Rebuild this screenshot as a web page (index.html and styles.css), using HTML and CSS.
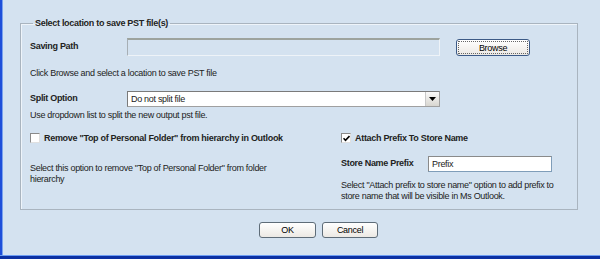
FILE: index.html
```html
<!DOCTYPE html>
<html lang="en">
<head>
  <meta charset="UTF-8" />
  <title>Save PST</title>
  <link rel="stylesheet" href="styles.css">
</head>
<body>

<div class="window">
  <div class="dialog">
    <fieldset class="group">
      <legend>Select location to save PST file(s)</legend>

      <div class="row path-row">
        <span class="label">Saving Path</span>
        <div class="textbox disabled path-box"></div>
        <button class="btn browse"><span class="focus">Browse</span></button>
      </div>
      <div class="hint hint-path">Click Browse and select a location to save PST file</div>

      <div class="row split-row">
        <span class="label">Split Option</span>
        <div class="select">
          <span class="select-text">Do not split file</span>
          <span class="select-arrow"><svg width="7" height="4" viewBox="0 0 7 4"><path d="M0 0h7L3.5 4z" fill="#000"/></svg></span>
        </div>
      </div>
      <div class="hint hint-split">Use dropdown list to split the new output pst file.</div>

      <div class="columns">
        <div class="col left-col">
          <label class="check">
            <span class="box"></span>
            <span class="check-text">Remove "Top of Personal Folder" from hierarchy in Outlook</span>
          </label>
          <div class="hint hint-remove">Select this option to remove "Top of Personal Folder" from folder hierarchy</div>
        </div>

        <div class="col right-col">
          <label class="check">
            <span class="box"><svg width="7" height="7" viewBox="0 0 7 7"><path d="M0.5 3.2L2.5 5.3L6.5 1" stroke="#000" stroke-width="1.6" fill="none"/></svg></span>
            <span class="check-text">Attach Prefix To Store Name</span>
          </label>
          <div class="row prefix-row">
            <span class="label prefix-label">Store Name Prefix</span>
            <div class="textbox prefix-box">Prefix</div>
          </div>
          <div class="hint hint-prefix">Select "Attach prefix to store name" option to add prefix to store name that will be visible in Ms Outlook.</div>
        </div>
      </div>
    </fieldset>

    <div class="actions">
      <button class="btn ok">OK</button>
      <button class="btn cancel">Cancel</button>
    </div>
  </div>
  <div class="frame-bottom"></div>
</div>

</body>
</html>
```
FILE: styles.css
```css
* {
  box-sizing: border-box;
  font-family: 'Liberation Sans', Arial, sans-serif;
}

body {
  margin: 0;
  background-color: #d4e2f0;
  color: #222;
  font-size: 9px;
  letter-spacing: -0.3px;
}

.window {
  width: 600px;
  height: 259px;
  display: flex;
  flex-direction: column;
  border-left: 2px solid #1f4fd9;
}

.dialog {
  flex-grow: 1;
  padding-top: 17px;
  border-left: 1px solid #7aa2ee;
}

.frame-bottom {
  height: 4px;
  background-color: #0c31a2;
  border-top: 1px solid #6c9cf3;
  margin-left: -2px;
}

/* group box */
.group {
  margin: 0 0 0 17px;
  width: 558px;
  height: 193px;
  padding: 0 0 0 9px;
  border: 1px solid #a9b4bf;
  box-shadow: inset 1px 1px 0 #eef4fa;
  min-width: 0;
}

.group legend {
  font-weight: bold;
  padding: 0 2px;
  margin-left: 3px;
  line-height: 12px;
}

.row {
  display: flex;
  align-items: center;
}

.label {
  font-weight: bold;
  width: 97px;
  flex-shrink: 0;
}

.textbox {
  background-color: #fff;
  border: 1px solid #7f9db9;
  border-top-color: #8a8a8a;
  border-left-color: #8a8a8a;
  padding-left: 3px;
}

.textbox.disabled {
  background-color: #d4e2f0;
  border: 1px solid #a7afb5;
  border-top: 2px solid #9da39e;
  border-bottom-color: #eef3f8;
  border-right-color: #eef3f8;
}

.path-row {
  margin-top: 9px;
  height: 18px;
}

.path-row .label {
  margin-top: -3px;
}

.path-box {
  width: 313px;
  height: 18px;
}

.btn {
  font-size: 9px;
  letter-spacing: -0.3px;
  color: #000;
  background: linear-gradient(#ffffff, #ece9e4);
  border: 1px solid #5e6c78;
  border-radius: 3px;
  padding: 0;
}

.browse {
  margin-left: 16px;
  width: 74px;
  height: 17px;
  border-color: #3c5a86;
  padding: 1px;
}

.browse .focus {
  display: block;
  height: 100%;
  line-height: 13px;
  border: 1px dotted #666;
}

.hint {
  line-height: 11px;
}

.hint-path {
  margin-top: 12px;
}

.split-row {
  margin-top: 12px;
  height: 16px;
}

.split-row .label {
  margin-top: -3px;
}

.select {
  width: 313px;
  height: 16px;
  background-color: #fff;
  border: 1px solid #a0a0a0;
  border-top-color: #7a7a7a;
  border-left-color: #7a7a7a;
  display: flex;
  align-items: center;
  justify-content: space-between;
}

.select-text {
  padding-left: 3px;
}

.select-arrow {
  width: 14px;
  height: 14px;
  background: linear-gradient(#fafafa, #d8d6d0);
  border-left: 1px solid #c8c8c8;
  display: flex;
  align-items: center;
  justify-content: center;
}

.hint-split {
  margin-top: 3px;
}

.columns {
  display: flex;
  margin-top: 11px;
}

.left-col {
  width: 311px;
}

.right-col {
  width: 230px;
}

.check {
  display: flex;
  align-items: center;
  height: 12px;
  font-weight: bold;
}

.box {
  width: 10px;
  height: 10px;
  background-color: #fff;
  border: 1px solid #8a8a8a;
  border-right-color: #e0e0e0;
  border-bottom-color: #e0e0e0;
  margin-right: 4px;
  display: flex;
  align-items: center;
  justify-content: center;
}

.hint-remove {
  margin-top: 19px;
  width: 270px;
}

.prefix-row {
  margin-top: 12px;
  height: 16px;
}

.prefix-label {
  width: 87px;
  margin-top: -3px;
}

.prefix-box {
  width: 124px;
  height: 16px;
  line-height: 14px;
}

.hint-prefix {
  margin-top: 8px;
  width: 220px;
}

.actions {
  display: flex;
  gap: 6px;
  margin-top: 12px;
  padding-left: 256px;
}

.ok {
  width: 57px;
  height: 16px;
}

.cancel {
  width: 56px;
  height: 16px;
}
```
